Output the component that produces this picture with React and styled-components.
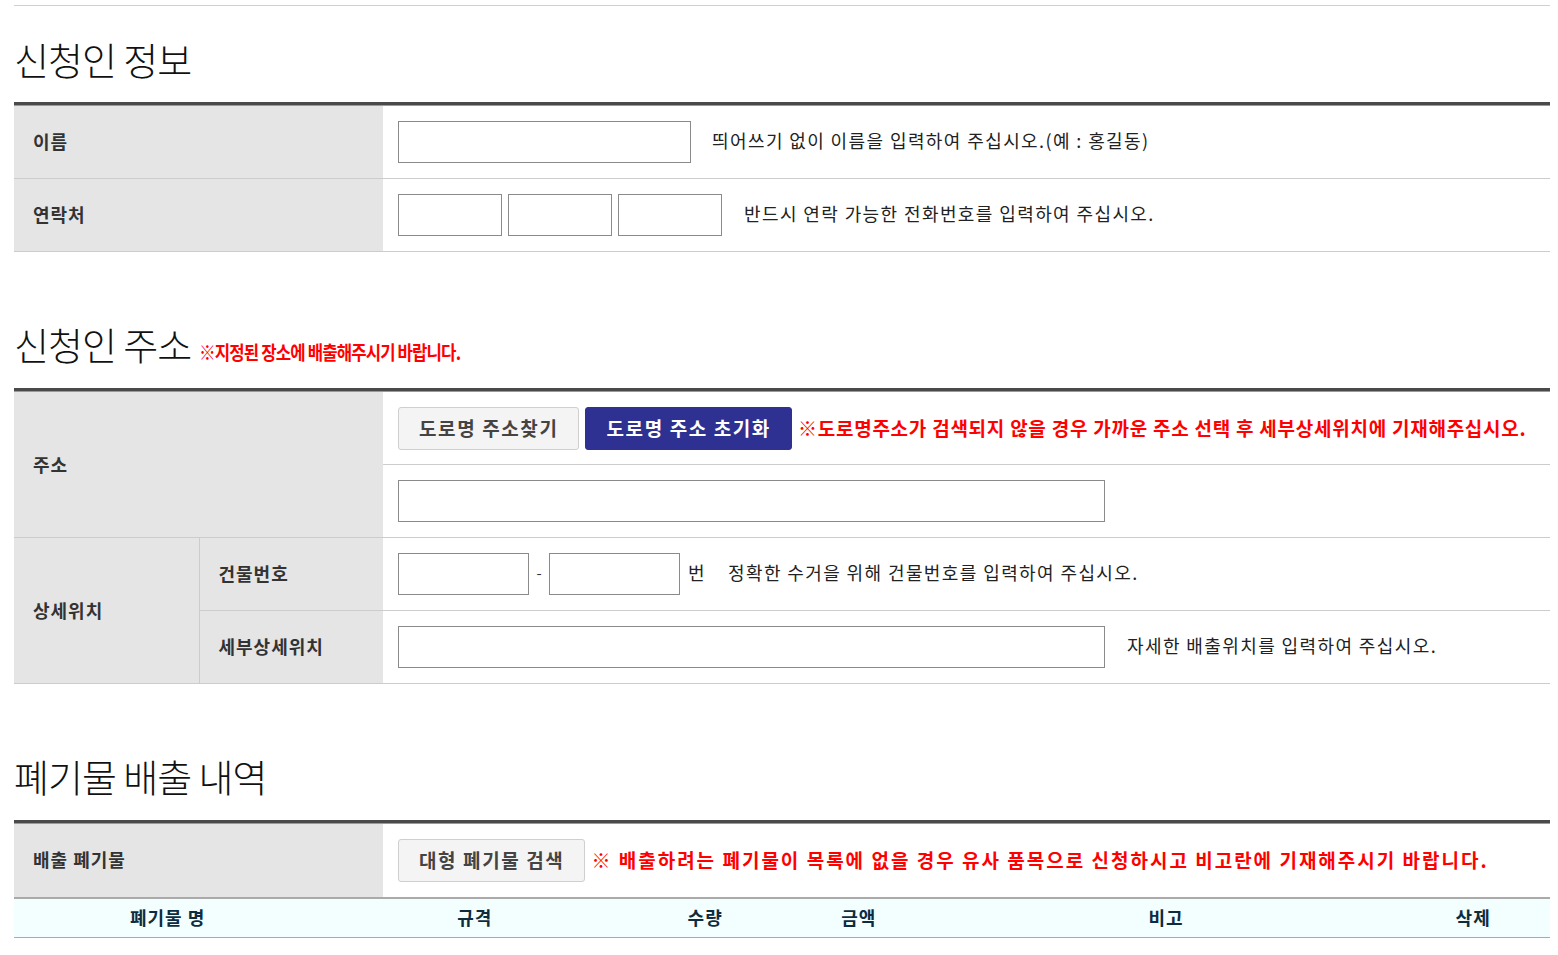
import React from "react";
import styled, { createGlobalStyle } from "styled-components";

const GlobalStyle = createGlobalStyle`
  html, body { margin: 0; padding: 0; background: #fff; }
  body { font-family: "Noto Sans CJK KR", "Noto Sans", sans-serif; color: #222; }
  * { box-sizing: border-box; }
`;

const Page = styled.div`
  padding: 5px 8px 0 14px;
`;

const TopRule = styled.div`
  border-top: 1px solid #d0d0d0;
`;

const Section = styled.section`
  margin-top: ${(p) => p.$top}px;
`;

const TitleRow = styled.div`
  display: flex;
  align-items: baseline;
  gap: 8px;
  height: 56px;
`;

const Title = styled.h2`
  margin: 0;
  font-size: 38px;
  font-weight: 300;
  line-height: 56px;
  color: #111;
  letter-spacing: -1px;
  white-space: nowrap;
`;

const RedNoteSmall = styled.span`
  display: inline-block;
  font-size: 19px;
  font-weight: 700;
  color: #ff0000;
  letter-spacing: -1px;
  transform: scaleX(0.88);
  transform-origin: left center;
  white-space: nowrap;
`;

const TableFrame = styled.div`
  border-top: 3px solid #4a4a4a;
  margin-top: ${(p) => p.$mt}px;
`;

const Table = styled.table`
  width: 100%;
  border-collapse: collapse;
  border-top: 1px solid #9a9a9a;
  table-layout: fixed;
`;

const Row = styled.tr`
  border-bottom: 1px solid ${(p) => p.$line || "#cccccc"};
`;

const Label = styled.th`
  background: #e5e5e5;
  text-align: left;
  font-size: 18px;
  font-weight: 700;
  color: #333;
  letter-spacing: 1px;
  padding: 0 0 2px 19px;
  height: 73px;
  border-right: ${(p) => (p.$divider ? "1px solid #cccccc" : "none")};
  vertical-align: middle;
`;

const Cell = styled.td`
  padding: 0 0 0 15px;
  height: 73px;
  vertical-align: middle;
`;

const Line = styled.div`
  display: flex;
  align-items: center;
  gap: ${(p) => p.$gap ?? 6}px;
`;

const Input = styled.input`
  width: ${(p) => p.$w}px;
  height: 42px;
  border: 1px solid #8a8a8a;
  background: #fff;
  margin: 0;
  padding: 0 8px;
  font-size: 16px;
  font-family: inherit;
  flex: none;
`;

const Help = styled.span`
  font-size: 18px;
  color: #222;
  margin-left: ${(p) => p.$ml || 0}px;
  padding-bottom: 5px;
  letter-spacing: 1.4px;
  white-space: nowrap;
`;

const Dash = styled.span`
  font-size: 15px;
  color: #333;
  width: 8px;
  margin: 0 6px;
  padding-bottom: 3px;
  text-align: center;
`;

const Button = styled.button`
  height: 43px;
  padding: 0 20px 2px;
  font-family: inherit;
  font-size: 19px;
  font-weight: 700;
  border-radius: 3px;
  cursor: pointer;
  flex: none;
  color: ${(p) => (p.$primary ? "#fff" : "#444")};
  background: ${(p) => (p.$primary ? "#2e3192" : "#f4f4f4")};
  border: 1px solid ${(p) => (p.$primary ? "#2e3192" : "#cfcfcf")};
  letter-spacing: 1.6px;
`;

const RedNote = styled.span`
  font-size: 19px;
  font-weight: 700;
  color: #ff0000;
  white-space: nowrap;
  padding-bottom: 1px;
  letter-spacing: ${(p) => p.$ls}px;
`;

const HeadTable = styled.table`
  width: 100%;
  border-collapse: collapse;
  table-layout: fixed;
  border-top: 2px solid #aaaaaa;
  border-bottom: 1px solid #aaaaaa;
`;

const HeadCell = styled.th`
  background: #f3ffff;
  height: 39px;
  padding: 0 0 2px;
  font-size: 18px;
  font-weight: 700;
  letter-spacing: 1px;
  color: #0d2c40;
  text-align: center;
`;

const cols = [
  ["폐기물 명", "20%"],
  ["규격", "20%"],
  ["수량", "10%"],
  ["금액", "10%"],
  ["비고", "30%"],
  ["삭제", "10%"],
];

export default function App() {
  return (
    <Page>
      <GlobalStyle />
      <TopRule />

      <Section $top={25}>
        <TitleRow>
          <Title>신청인 정보</Title>
        </TitleRow>
        <TableFrame $mt={15}>
          <Table>
            <colgroup>
              <col style={{ width: 369 }} />
              <col />
            </colgroup>
            <tbody>
              <Row>
                <Label>이름</Label>
                <Cell>
                  <Line>
                    <Input $w={293} />
                    <Help $ml={15}>띄어쓰기 없이 이름을 입력하여 주십시오.(예 : 홍길동)</Help>
                  </Line>
                </Cell>
              </Row>
              <Row>
                <Label>연락처</Label>
                <Cell>
                  <Line>
                    <Input $w={104} />
                    <Input $w={104} />
                    <Input $w={104} />
                    <Help $ml={16}>반드시 연락 가능한 전화번호를 입력하여 주십시오.</Help>
                  </Line>
                </Cell>
              </Row>
            </tbody>
          </Table>
        </TableFrame>
      </Section>

      <Section $top={64}>
        <TitleRow>
          <Title>신청인 주소</Title>
          <RedNoteSmall>※지정된 장소에 배출해주시기 바랍니다.</RedNoteSmall>
        </TitleRow>
        <TableFrame $mt={16}>
          <Table>
            <colgroup>
              <col style={{ width: 185 }} />
              <col style={{ width: 184 }} />
              <col />
            </colgroup>
            <tbody>
              <Row>
                <Label colSpan={2} rowSpan={2}>주소</Label>
                <Cell>
                  <Line>
                    <Button>도로명 주소찾기</Button>
                    <Button $primary>도로명 주소 초기화</Button>
                    <RedNote $ls={0.75}>※도로명주소가 검색되지 않을 경우 가까운 주소 선택 후 세부상세위치에 기재해주십시오.</RedNote>
                  </Line>
                </Cell>
              </Row>
              <Row>
                <Cell>
                  <Line>
                    <Input $w={707} />
                  </Line>
                </Cell>
              </Row>
              <Row>
                <Label rowSpan={2} $divider>상세위치</Label>
                <Label>건물번호</Label>
                <Cell>
                  <Line $gap={0}>
                    <Input $w={131} />
                    <Dash>-</Dash>
                    <Input $w={131} />
                    <Help $ml={8}>번</Help>
                    <Help $ml={22}>정확한 수거을 위해 건물번호를 입력하여 주십시오.</Help>
                  </Line>
                </Cell>
              </Row>
              <Row>
                <Label>세부상세위치</Label>
                <Cell>
                  <Line>
                    <Input $w={707} />
                    <Help $ml={16}>자세한 배출위치를 입력하여 주십시오.</Help>
                  </Line>
                </Cell>
              </Row>
            </tbody>
          </Table>
        </TableFrame>
      </Section>

      <Section $top={64}>
        <TitleRow>
          <Title>폐기물 배출 내역</Title>
        </TitleRow>
        <TableFrame $mt={16}>
          <Table>
            <colgroup>
              <col style={{ width: 369 }} />
              <col />
            </colgroup>
            <tbody>
              <Row $line="transparent">
                <Label>배출 폐기물</Label>
                <Cell>
                  <Line>
                    <Button>대형 폐기물 검색</Button>
                    <RedNote $ls={2}>※ 배출하려는 폐기물이 목록에 없을 경우 유사 품목으로 신청하시고 비고란에 기재해주시기 바랍니다.</RedNote>
                  </Line>
                </Cell>
              </Row>
            </tbody>
          </Table>
        </TableFrame>
        <HeadTable>
          <colgroup>
            {cols.map(([t, w]) => (
              <col key={t} style={{ width: w }} />
            ))}
          </colgroup>
          <thead>
            <tr>
              {cols.map(([t]) => (
                <HeadCell key={t}>{t}</HeadCell>
              ))}
            </tr>
          </thead>
        </HeadTable>
      </Section>
    </Page>
  );
}
